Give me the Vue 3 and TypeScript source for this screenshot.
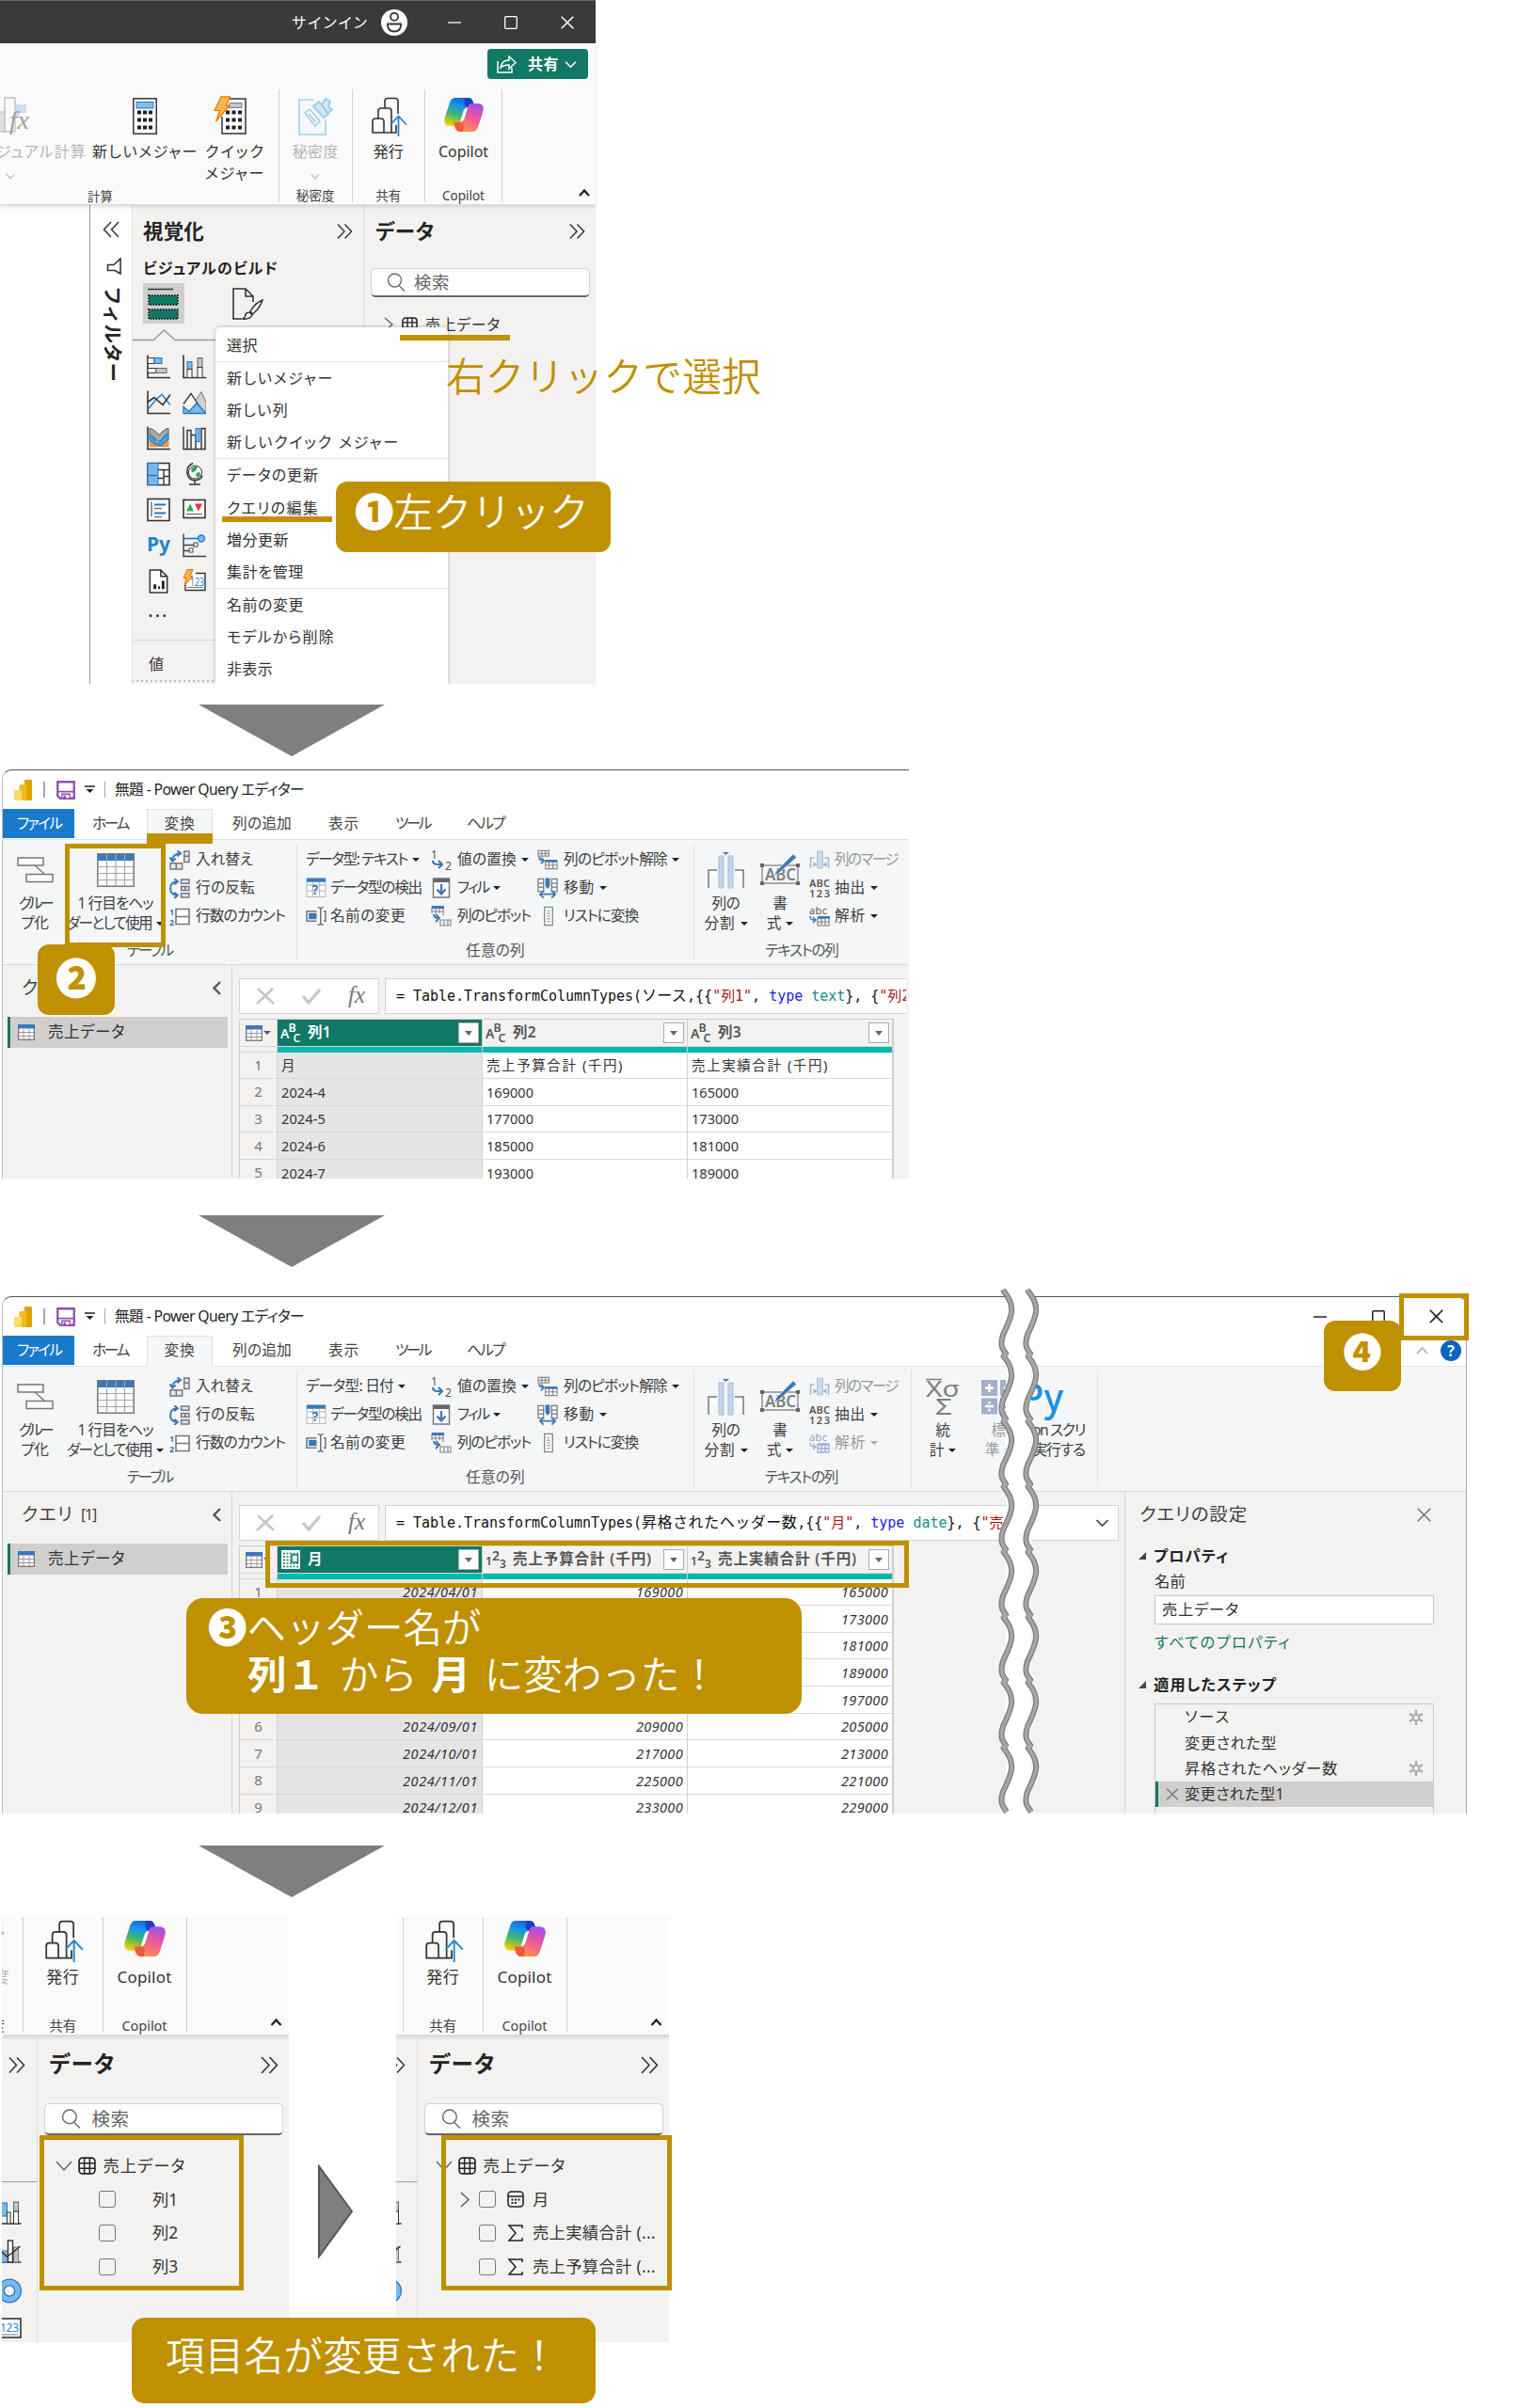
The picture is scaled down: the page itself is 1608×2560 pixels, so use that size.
<script setup lang="ts">
interface Cmd { icon?: string; text: string; w: number; arrow?: boolean; dim?: boolean }
interface Cell { text: string; w: number }
interface Editor {
  id: string
  typeCmd: Cmd
  parse: Cmd
  source: string
  sourceW: number
  col: string
  kind: string
  kindCut: string
  heads: { name: string; w: number; icon: string; sel?: boolean }[]
  rows: Cell[][]
}

/* Spreads the letters of a label so that it takes exactly the given width. */
const vFit = {
  mounted(el: HTMLElement, binding: { value: number }) {
    const n = (el.textContent ?? '').length
    const natural = el.getBoundingClientRect().width
    if (n > 0) el.style.letterSpacing = `${(binding.value - natural) / n}px`
  },
}

const menu: Cell[][] = [
  [{ text: '選択', w: 33 }],
  [{ text: '新しいメジャー', w: 114 }, { text: '新しい列', w: 66 }, { text: '新しいクイック メジャー', w: 184 }],
  [{ text: 'データの更新', w: 98 }, { text: 'クエリの編集', w: 98 }, { text: '増分更新', w: 66 }, { text: '集計を管理', w: 82 }],
  [{ text: '名前の変更', w: 82 }, { text: 'モデルから削除', w: 115 }, { text: '非表示', w: 49 }],
]

const visuals = ['v-hbar', 'v-vbar', 'v-line', 'v-area', 'v-ribbon', 'v-fall', 'v-tree', 'v-globe', 'v-card', 'v-kpi', 'v-py', 'v-key', 'v-page', 'v-123']

const tabs = [
  { text: 'ホーム', w: 38, ml: 19 },
  { text: '変換', w: 33, ml: 20, on: true },
  { text: '列の追加', w: 63, ml: 21 },
  { text: '表示', w: 33, ml: 39 },
  { text: 'ツール', w: 37, ml: 38 },
  { text: 'ヘルプ', w: 40, ml: 39 },
]

const tableCmds: Cmd[] = [
  { icon: 'q-swap', text: '入れ替え', w: 61 },
  { icon: 'q-rev', text: '行の反転', w: 63 },
  { icon: 'q-count', text: '行数のカウント', w: 95 },
]
const anyCmds = (first: Cmd): Cmd[][] => [
  [first, { icon: 'q-detect', text: 'データ型の検出', w: 97 }, { icon: 'q-rename', text: '名前の変更', w: 80 }],
  [{ icon: 'q-replace', text: '値の置換', w: 63, arrow: true }, { icon: 'q-fill', text: 'フィル', w: 33, arrow: true }, { icon: 'q-pivot', text: '列のピボット', w: 78 }],
  [{ icon: 'q-unpivot', text: '列のピボット解除', w: 110, arrow: true }, { icon: 'q-move', text: '移動', w: 33, arrow: true }, { icon: 'q-list', text: 'リストに変換', w: 79 }],
]
const textCmds = (parse: Cmd): Cmd[] => [
  { icon: 'q-merge', text: '列のマージ', w: 67, dim: true },
  { icon: 'q-extract', text: '抽出', w: 33, arrow: true },
  parse,
]

const months = ['04', '05', '06', '07', '08', '09', '10', '11', '12']

const editors: Editor[] = [
  {
    id: 'before',
    typeCmd: { text: 'データ型: テキスト', w: 108, arrow: true },
    parse: { icon: 'q-parse', text: '解析', w: 33, arrow: true },
    source: 'ソース', sourceW: 48, col: '列1', kind: 'text', kindCut: '列2',
    heads: [
      { name: '列1', w: 25, icon: 'q-abc', sel: true },
      { name: '列2', w: 25, icon: 'q-abc' },
      { name: '列3', w: 25, icon: 'q-abc' },
    ],
    rows: [
      [{ text: '月', w: 16 }, { text: '売上予算合計 (千円)', w: 146 }, { text: '売上実績合計 (千円)', w: 146 }],
      ...[4, 5, 6, 7].map((m, i) => [
        { text: `2024-${m}`, w: 47 },
        { text: String(169000 + i * 8000), w: 50 },
        { text: String(165000 + i * 8000), w: 50 },
      ]),
    ],
  },
  {
    id: 'after',
    typeCmd: { text: 'データ型: 日付', w: 93, arrow: true },
    parse: { icon: 'q-parse-dim', text: '解析', w: 33, arrow: true, dim: true },
    source: '昇格されたヘッダー数', sourceW: 165, col: '月', kind: 'date', kindCut: '売',
    heads: [
      { name: '月', w: 16, icon: 'q-cal', sel: true },
      { name: '売上予算合計 (千円)', w: 148, icon: 'q-123' },
      { name: '売上実績合計 (千円)', w: 148, icon: 'q-123' },
    ],
    rows: months.map((m, i) => [
      { text: `2024/${m}/01`, w: 80 },
      { text: String(169000 + i * 8000), w: 50 },
      { text: String(165000 + i * 8000), w: 50 },
    ]),
  },
]

const steps = [
  { text: 'ソース', w: 49, gear: true },
  { text: '変更された型', w: 98 },
  { text: '昇格されたヘッダー数', w: 163, gear: true },
  { text: '変更された型1', w: 106, on: true },
]

const wave = (x: number): string => {
  const p = 69.4
  let d = `M${x} 3`
  for (let i = 0; i < 8; i++) {
    const y = 3 + i * p
    d += ` L${x + 1} ${y + 2} C${x + 16} ${y + 20} ${x + 7} ${y + 32} ${x} ${y + 48} C${x - 4} ${y + 60} ${x} ${y + 64} ${x + 4} ${y + p}`
    if (i < 7) d += ` L${x} ${y + p}`
  }
  return d
}

const panes = [
  { id: 'old', fields: [{ name: '列1', w: 27 }, { name: '列2', w: 27 }, { name: '列3', w: 27 }] },
  { id: 'new', fields: [
    { name: '月', w: 18, icon: 'f-cal', expand: true },
    { name: '売上実績合計 (...', w: 131, icon: 'f-sum' },
    { name: '売上予算合計 (...', w: 131, icon: 'f-sum' },
  ] },
] as { id: string; fields: { name: string; w: number; icon?: string; expand?: boolean }[] }[]
</script>

<template>
  <svg class="defs" width="0" height="0">
    <defs>
      <linearGradient id="cpA" x1="0.6" y1="0" x2="0.3" y2="1">
        <stop offset="0" stop-color="#1a5fe0" /><stop offset=".3" stop-color="#1597e8" />
        <stop offset=".6" stop-color="#3fb56d" /><stop offset="1" stop-color="#f5d000" />
      </linearGradient>
      <linearGradient id="cpB" x1="0.7" y1="0" x2="0.3" y2="1">
        <stop offset="0" stop-color="#a34fe8" /><stop offset=".45" stop-color="#f0559a" /><stop offset="1" stop-color="#fb9a45" />
      </linearGradient>
    </defs>
  </svg>
  <svg class="symbols">
    <symbol id="dbl-l" viewBox="0 0 18 18"><path d="M9 1L1.500 9 9 17M17 1L9.500 9 17 17" fill="none" stroke="#333" stroke-width="1.500" /></symbol>
    <symbol id="dbl-r" viewBox="0 0 18 18"><path d="M1 1L8.500 9 1 17M9 1L16.500 9 9 17" fill="none" stroke="#333" stroke-width="1.500" /></symbol>
    <symbol id="chev" viewBox="0 0 14 10"><path d="M1 2l6 6 6-6" fill="none" stroke="currentColor" stroke-width="1.700" /></symbol>
    <symbol id="caret" viewBox="0 0 12 10"><path d="M1 8l5-5.500 5 5.500" fill="none" stroke="#222" stroke-width="2.300" /></symbol>
    <symbol id="close" viewBox="0 0 14 14"><path d="M.7.7l12.600 12.600M13.300.7L.7 13.300" fill="none" stroke="currentColor" stroke-width="1.500" /></symbol>
    <symbol id="search" viewBox="0 0 20 20"><circle cx="8.500" cy="8" r="7" fill="none" stroke="#666" stroke-width="1.300" /><path d="M13 13.500l6 6" stroke="#666" stroke-width="1.300" /></symbol>
    <symbol id="grid" viewBox="0 0 18 18"><rect x="1" y="1" width="16" height="16" rx="3.500" fill="none" stroke="#222" stroke-width="1.600" /><path d="M6.300 1v16M11.700 1v16M1 6.300h16M1 11.700h16" stroke="#222" stroke-width="1.400" /></symbol>
    <symbol id="calc" viewBox="0 0 26 39">
      <rect x=".8" y=".8" width="24.400" height="37.400" fill="#fff" stroke="#333" stroke-width="1.500" />
      <rect x="4" y="4.500" width="18" height="6.500" fill="#83beec" stroke="#1e78c8" />
      <path d="M5 15.500h16M5 23.500h16M5 31.500h16" stroke="#222" stroke-width="4" stroke-dasharray="4 2" />
    </symbol>
    <symbol id="quick" viewBox="0 0 35 41">
      <path d="M9 22v18h25V3H16" fill="#fff" stroke="#333" stroke-width="1.500" />
      <path d="M17 7.500h13v5H16z" fill="#c8c6c4" stroke="#777" />
      <path d="M13 17.500h17M13 25.500h17M13 33.500h17" stroke="#222" stroke-width="4" stroke-dasharray="4 2.500" />
      <path d="M8 .8h9.500l-4 9.500H17L2.500 27l4-11.500H1z" fill="#ffb74d" stroke="#e07b00" stroke-width="1.200" />
    </symbol>
    <symbol id="visfx" viewBox="0 0 31 40">
      <path d="M0 16h6v21H0" fill="#e1dfdd" stroke="#bbb" /><rect x="5" y="1" width="11" height="36" fill="#fafafa" stroke="#aaa" /><path d="M17 8h11v9h-8v6h-3z" fill="#c7e0f4" />
      <text x="10" y="34" font-family="Liberation Serif, serif" font-style="italic" font-size="28" textLength="21" fill="#a19f9d">fx</text>
    </symbol>
    <symbol id="sens" viewBox="0 0 37 41">
      <path d="M16 3H1v37h28V24" fill="#f3f9fd" stroke="#a5d0ea" stroke-width="1.600" />
      <path d="M7 17l5-4 11 13-5 5zM11 18l8 9" fill="#fafafa" stroke="#9ccce8" stroke-width="1.500" />
      <path d="M16 10l6-5 10 13-5 4zM25 8l4-6 5 3-2 6 4 2 -5 5z" fill="#cfe6f5" stroke="#9ccce8" stroke-width="1.800" />
    </symbol>
    <symbol id="publish" viewBox="0 0 38 42">
      <path d="M1 38V26q0-3 3-3h6q3 0 3 3v12zM7 23v-8q0-3 3-3h8q3 0 3 3v23H13M14 12V4.500q0-3 3-3h8q3 0 3 3V18M21 38h5V30" fill="none" stroke="#333" stroke-width="1.600" />
      <path d="M28.500 42V20.500M20 29.500l8.500-9 8.500 9" fill="none" stroke="#2488c8" stroke-width="1.800" />
    </symbol>
    <symbol id="copilot" viewBox="0 0 42 38">
      <path d="M12 1h13q4.500 0 6 5l1.500 5h-6q-4.500 0-6 4l-4 13q-1 3-4 3H7Q-1.500 31 .8 22L6 6q1.500-5 6-5z" fill="url(#cpA)" />
      <path d="M22 1h5q3 1 4 5l1.500 5h-7q-3 0-4-4z" fill="#1b3fc4" />
      <path d="M30 37H17q-4.500 0-6-5L9.500 27h6q4.500 0 6-4l4-13q1-3 4-3H35q8.500 0 6.200 9L36 32q-1.500 5-6 5z" fill="url(#cpB)" />
      <path d="M20 37h-4q-3-1-4-5l-1.500-5h6q4 0 4.500 4z" fill="#f05a3c" />
    </symbol>

    <symbol id="v-hbar" viewBox="0 0 25 25"><path d="M1 0v24h24" fill="none" stroke="#333" stroke-width="1.600" /><rect x="1" y="3" width="7" height="6" fill="#fff" stroke="#333" /><rect x="8" y="3" width="8" height="6" fill="#7ab8ea" stroke="#1f77c9" /><rect x="1" y="14" width="9" height="5" fill="#fff" stroke="#333" /><rect x="10" y="14" width="11" height="5" fill="#c8c6c4" stroke="#666" /></symbol>
    <symbol id="v-vbar" viewBox="0 0 25 25"><path d="M1 0v24h24" fill="none" stroke="#333" stroke-width="1.600" /><rect x="5" y="7" width="5" height="8" fill="#7ab8ea" stroke="#1f77c9" /><rect x="5" y="15" width="5" height="9" fill="#fff" stroke="#333" /><rect x="16" y="3" width="5" height="10" fill="#c8c6c4" stroke="#666" /><rect x="16" y="13" width="5" height="11" fill="#fff" stroke="#333" /></symbol>
    <symbol id="v-line" viewBox="0 0 25 25"><path d="M1 0v24h24" fill="none" stroke="#333" stroke-width="1.600" /><path d="M1 20L10 9l6-5 9 11" fill="none" stroke="#1f8ad0" stroke-width="1.600" /><path d="M1 12l7-5 9 8 8-11" fill="none" stroke="#333" stroke-width="1.600" /></symbol>
    <symbol id="v-area" viewBox="0 0 25 25"><path d="M13 12l7-11 5 11v12" fill="#d2d0ce" stroke="#777" /><path d="M1 14L9 3l8 12" fill="#fff" stroke="#333" stroke-width="1.300" /><path d="M1 17l6 5 8-9 10 11H1z" fill="#7ab8ea" stroke="#1f77c9" stroke-width="1.300" /></symbol>
    <symbol id="v-ribbon" viewBox="0 0 25 25"><path d="M1 0v24h24" fill="none" stroke="#333" stroke-width="1.600" /><path d="M3 12h5v9H3zM17 12h6v9h-6zM8 18h9v3H8z" fill="#f5a23c" stroke="#d9801a" stroke-width=".8" /><path d="M3 2q4 0 10 7 6-7 10-7v7l-10 7L3 9z" fill="#aaa" stroke="#555" /><path d="M3 9q4 0 6 5t4 2q2 0 4-4t6-4v5q-5 7-10 7T3 14z" fill="#4a9fe0" stroke="#1f6fb8" /></symbol>
    <symbol id="v-fall" viewBox="0 0 25 25"><path d="M1 0v24h24M5 24V4h4v20M9 9h5v15M20 24V2h4v22" fill="none" stroke="#333" stroke-width="1.400" /><rect x="14" y="2" width="4" height="14" fill="#7ab8ea" stroke="#1f77c9" /></symbol>
    <symbol id="v-tree" viewBox="0 0 25 25"><rect x="1" y="1" width="23" height="23" fill="#fff" stroke="#333" stroke-width="1.600" /><rect x="1" y="1" width="11" height="23" fill="#7ab8ea" stroke="#1f77c9" /><path d="M1 14h11" stroke="#1f77c9" stroke-width="1.400" /><path d="M12 8h12M18 8v16M12 17h6M18 15h6" stroke="#333" stroke-width="1.400" /></symbol>
    <symbol id="v-globe" viewBox="0 0 25 25"><circle cx="13.500" cy="10.500" r="7" fill="#fff" stroke="#333" /><path d="M9 7q4-4 7-2l-2 4-4 2zM14 12l4-2 1 4-4 2z" fill="#2ea04e" /><path d="M11 1Q4 4 5 12q2 8 10 7 5-1 6-5M13 19v4M7 23.500h12" fill="none" stroke="#333" stroke-width="1.500" /></symbol>
    <symbol id="v-card" viewBox="0 0 25 25"><rect x="1" y="1" width="23" height="23" fill="#fff" stroke="#333" stroke-width="1.600" /><path d="M5 4v16" stroke="#333" /><path d="M8 7h12M8 16h12" stroke="#1f77c9" stroke-width="2" /><path d="M8 11h8M8 20h8" stroke="#777" stroke-width="1.500" /></symbol>
    <symbol id="v-kpi" viewBox="0 0 25 25"><rect x="1" y="2" width="23" height="19" fill="#fff" stroke="#333" stroke-width="1.600" /><path d="M4 14l4-8 4 8z" fill="#3aa655" /><path d="M13 6h8l-4 8z" fill="#e8323c" /><path d="M4 17h17" stroke="#555" /></symbol>
    <symbol id="v-py" viewBox="0 0 25 25"><text x="0" y="18" font-family="Noto Sans, sans-serif" font-weight="700" font-size="22" textLength="25" lengthAdjust="spacingAndGlyphs" fill="#1c86cf">Py</text></symbol>
    <symbol id="v-key" viewBox="0 0 25 25"><path d="M1 0v24h24M1 12h12M1 18h8" fill="none" stroke="#444" stroke-width="1.500" /><path d="M1 5h15" stroke="#1f77c9" stroke-width="1.600" /><circle cx="20" cy="5" r="3.500" fill="#7ab8ea" stroke="#1f77c9" stroke-width="1.300" /><rect x="12" y="9.500" width="4" height="4" fill="#fff" stroke="#444" /><rect x="7" y="15.500" width="4" height="4" fill="#fff" stroke="#444" /></symbol>
    <symbol id="v-page" viewBox="0 0 25 27"><path d="M3 1h12l7 7v18H3zM15 1v7h7" fill="#fff" stroke="#333" stroke-width="1.600" /><path d="M7 22v-5h3v5zM12 22v-3h2v3zM16 22v-9h3v9z" fill="#222" /></symbol>
    <symbol id="v-123" viewBox="0 0 25 25"><path d="M14 4h10v18H3v-6" fill="#fff" stroke="#333" stroke-width="1.400" /><text x="8" y="17" font-family="Noto Sans, sans-serif" font-size="12" textLength="15" lengthAdjust="spacingAndGlyphs" fill="#1f8ad0">123</text><path d="M5 19h17" stroke="#777" /><path d="M5 0h6l-3 7h3L2 17l2-8H1z" fill="#ffb04a" stroke="#d87400" /></symbol>

    <symbol id="q-pbi" viewBox="0 0 19 22"><rect x="11" y="0" width="8" height="22" rx="1" fill="#e3a100" /><path d="M5.500 6q0-1 1-1h6q1 0 1 1v16h-8z" fill="#f0bd1c" /><path d="M0 12q0-1 1-1h6q1 0 1 1v10H1q-1 0-1-1z" fill="#f8dc6a" /></symbol>
    <symbol id="q-save" viewBox="0 0 19 19"><path d="M1.200 1.200h16.600v16.600H3.700l-2.500-2.500z" fill="#fff" stroke="#8a52ab" stroke-width="2.200" /><path d="M1.500 11h16" stroke="#8a52ab" stroke-width="1.800" /><path d="M5.500 13.500h8V18h-8z" fill="#fff" stroke="#8a52ab" stroke-width="1.300" /><path d="M7 15h2.500v3H7z" fill="#8a52ab" /></symbol>
    <symbol id="q-group" viewBox="0 0 39 28"><path d="M19 9l10 9" stroke="#777" stroke-width="1.300" /><path d="M1 1h27v8H1zM10 18.500h28v8H10z" fill="#fff" stroke="#777" stroke-width="1.500" /></symbol>
    <symbol id="q-table" viewBox="0 0 40 36"><rect x=".8" y=".8" width="38.400" height="34.400" fill="#fff" stroke="#777" stroke-width="1.500" /><path d="M1 1h38v7H1z" fill="#3c79b8" /><path d="M1 14.500h38M1 21.500h38M1 28.500h38M10.500 1v34M20 1v34M29.500 1v34" stroke="#a6a6a6" stroke-width="1.200" /></symbol>
    <symbol id="q-swap" viewBox="0 0 21 20"><path d="M15 1h5v11h-5zM15 6h5M1 13h12v6H1zM7 13v6" fill="#e3ebf3" stroke="#777" stroke-width="1.400" /><path d="M3 10q0-6 8-7M8 .5L11.500 3 8 6M.5 7L3 11l3.500-3" fill="none" stroke="#3c79b8" stroke-width="1.900" /></symbol>
    <symbol id="q-rev" viewBox="0 0 21 20"><path d="M12 1h8v4h-8zM12 8h8v4h-8zM12 15h8v4h-8zM16 8v4" fill="#dbe7f2" stroke="#777" stroke-width="1.400" /><path d="M7 3q-6 1-6 7t6 7M5 0l3.500 3L5 6M5 14l3.500 3L5 20" fill="none" stroke="#3c79b8" stroke-width="1.900" /></symbol>
    <symbol id="q-count" viewBox="0 0 22 20"><path d="M7 2h14v16H7zM7 10h14" fill="#fff" stroke="#777" stroke-width="1.600" /><text x="0" y="8" font-family="Noto Sans, sans-serif" font-size="9" font-weight="700" fill="#3c79b8">1</text><text x="0" y="19" font-family="Noto Sans, sans-serif" font-size="9" font-weight="700" fill="#3c79b8">2</text></symbol>
    <symbol id="q-detect" viewBox="0 0 21 20"><path d="M1 1h19v18H1zM7 1v18M14 1v18M1 7h19M1 13h19" fill="#fff" stroke="#bbb" /><path d="M1 0h19v4H1z" fill="#3c79b8" /><text x="6.500" y="17" font-family="Noto Sans, sans-serif" font-size="13" font-weight="700" fill="#3c79b8">?</text></symbol>
    <symbol id="q-rename" viewBox="0 0 21 20"><path d="M11 5H1v10h10M18 5h2v10h-2" fill="none" stroke="#777" stroke-width="1.500" /><path d="M3 7h8v6H3z" fill="#3c79b8" /><path d="M12 1q3 0 3 2v14q0 2-3 2M18 1q-3 0-3 2M18 19q-3 0-3-2" fill="none" stroke="#666" stroke-width="1.300" /></symbol>
    <symbol id="q-replace" viewBox="0 0 22 22"><text x="0" y="10" font-family="Noto Sans, sans-serif" font-size="12" fill="#555">1</text><text x="15" y="22" font-family="Noto Sans, sans-serif" font-size="12" fill="#555">2</text><path d="M2 12q0 4 5 4h4M8 12l4 4-4 4" fill="none" stroke="#3c79b8" stroke-width="2.200" /></symbol>
    <symbol id="q-fill" viewBox="0 0 21 22"><path d="M2 1h17v20H2z" fill="#fff" stroke="#777" stroke-width="1.500" /><path d="M2 1h17v4H2z" fill="#666" /><path d="M10.500 7v10M6 12.500l4.500 5 4.500-5" fill="none" stroke="#3c79b8" stroke-width="2.300" /></symbol>
    <symbol id="q-pivot" viewBox="0 0 22 22"><path d="M1 1h12v9M1 1v7M5 2v6M9 2v6M1 6h12M10 15h11v6H10zM14 15v6M18 15v6" fill="none" stroke="#888" stroke-width="1.200" /><path d="M1 0h13v3H1z" fill="#3c79b8" /><path d="M3 9q0 4 5 4M5 9l4 4-4 4" fill="none" stroke="#3c79b8" stroke-width="1.900" /></symbol>
    <symbol id="q-unpivot" viewBox="0 0 23 22"><path d="M1 1h12v6H1zM5 1v6M9 1v6M1 4h12M9 12h13v9H9zM13 12v9M17.500 12v9M9 17h13" fill="#fff" stroke="#888" stroke-width="1.200" /><path d="M9 11h13v3H9z" fill="#3c79b8" /><path d="M2 8q0 4 5 4M4 8.500l3.500 3.500L4 15.500" fill="none" stroke="#3c79b8" stroke-width="1.700" /></symbol>
    <symbol id="q-move" viewBox="0 0 23 22"><path d="M1 1h6v14H1zM16 1h6v14h-6zM1 6h6M1 10h6M16 6h6M16 10h6" fill="#fff" stroke="#777" stroke-width="1.300" /><path d="M9 0h5v9l-2.500 3L9 9z" fill="#3c79b8" /><path d="M4 18h15M7 14l-4 4 4 4M16 14l4 4-4 4" fill="none" stroke="#3c79b8" stroke-width="1.800" /></symbol>
    <symbol id="q-list" viewBox="0 0 23 22"><rect x="8" y="1" width="9" height="20" fill="#fff" stroke="#888" stroke-width="1.400" /><path d="M10.500 5h4M10.500 8h4M10.500 11h4M10.500 14h4M10.500 17h4" stroke="#999" stroke-width="1.200" /></symbol>
    <symbol id="q-merge" viewBox="0 0 21 22"><path d="M1 20V9h4M20 20V9h-4" fill="none" stroke="#a3b6d3" stroke-width="1.500" /><path d="M8 2h6v18H8z" fill="#c9d9ec" stroke="#b3c5de" /><path d="M4 13l4 3-4 3M18 13l-4 3 4 3" fill="#a3b6d3" /></symbol>
    <symbol id="q-extract" viewBox="0 0 22 22"><g font-family="Noto Sans, sans-serif" font-size="11" font-weight="600" fill="#555"><text x="0" y="10" textLength="22">ABC</text><text x="0" y="21" textLength="22">123</text></g></symbol>
    <symbol id="q-parse" viewBox="0 0 22 22"><text x="0" y="9" font-family="Noto Sans, sans-serif" font-size="11" textLength="19" fill="#555">abc</text><path d="M9 13h12v8H9zM13 13v8M17 13v8M9 17h12" fill="#fff" stroke="#777" stroke-width="1.100" /><path d="M9 11h13v2.500H9z" fill="#3c79b8" /><path d="M1 11q0 4 4 4h2M4 12l3 3-3 3" fill="none" stroke="#3c79b8" stroke-width="1.500" /></symbol>
    <symbol id="q-parse-dim" viewBox="0 0 22 22"><text x="0" y="9" font-family="Noto Sans, sans-serif" font-size="11" textLength="19" fill="#8fa2c4">abc</text><path d="M9 13h12v8H9zM13 13v8M17 13v8M9 17h12M9 12h12M1 11q0 4 4 4h2M4 12l3 3-3 3" fill="none" stroke="#9cb0d2" stroke-width="1.300" /></symbol>
    <symbol id="q-split" viewBox="0 0 39 40"><path d="M1 39V20h9M38 39V20h-9" fill="#fff" stroke="#777" stroke-width="1.500" /><path d="M12 5h5v34h-5zM22 5h5v34h-5z" fill="#c3d5ea" stroke="#a7bdd9" /><path d="M16 1h7l-3.500 3z" fill="#3c79b8" /></symbol>
    <symbol id="q-format" viewBox="0 0 42 36"><rect x="2" y="13" width="38" height="19" fill="none" stroke="#777" stroke-width="1.200" /><path d="M0 11h4v4H0zM38 11h4v4h-4zM0 30h4v4H0zM38 30h4v4h-4z" fill="#666" /><text x="5" y="29" font-family="Noto Sans, sans-serif" font-size="17" font-weight="600" textLength="33" lengthAdjust="spacingAndGlyphs" fill="#808080">ABC</text><path d="M15 24l2-5L35 1l3.500 3.500L20 21z" fill="#3c79b8" stroke="#f4f6f8" stroke-width=".6" /></symbol>
    <symbol id="q-stat" viewBox="0 0 38 40"><g font-family="Noto Sans, sans-serif" fill="#808080"><path d="M1 1.500h17" stroke="#808080" stroke-width="1.600" /><text x="1" y="20" font-size="24" textLength="36" lengthAdjust="spacingAndGlyphs">Χσ</text><text x="11" y="39" font-size="23" textLength="18" lengthAdjust="spacingAndGlyphs">Σ</text></g></symbol>
    <symbol id="q-std" viewBox="0 0 38 40"><path d="M1 2h17v17H1zM21 2h17v17H21zM1 21.500h17v17H1zM21 21.500h17v17H21z" fill="#a3b0cc" /><path d="M9.500 6v9M5 10.500h9M25 10.500h9M5 30h9M9.500 25v2.500M9.500 33v2.500M25 26l9 9M34 26l-9 9" stroke="#fff" stroke-width="2.300" /></symbol>
    <symbol id="q-abc" viewBox="0 0 22 22"><g font-family="Noto Sans, sans-serif" font-weight="600" font-size="14" fill="currentColor"><text x="0" y="17">A</text><text x="8.500" y="10" font-size="12.500">B</text><text x="13.500" y="21" font-size="12.500">C</text></g></symbol>
    <symbol id="q-123" viewBox="0 0 22 22"><g font-family="Noto Sans, sans-serif" font-weight="600" fill="currentColor"><text x="0" y="17" font-size="12">1</text><text x="7" y="12" font-size="14">2</text><text x="15" y="20" font-size="12">3</text></g></symbol>
    <symbol id="q-cal" viewBox="0 0 22 22"><path d="M1 1h20v20H1z" fill="#fff" /><path d="M3 4.500h16M3 8h8M3 11.500h8M3 15h16M3 18.500h16" stroke="#117865" stroke-width="1.700" stroke-dasharray="2 1.500" /><path d="M12 6h6.500v8H12z" fill="#fff" stroke="#117865" stroke-width="1.600" /></symbol>
    <symbol id="q-mini" viewBox="0 0 18 17"><rect x=".7" y=".7" width="16.600" height="15.600" fill="#fff" stroke="#777" stroke-width="1.300" /><path d="M0 0h18v4.500H0z" fill="#3c79b8" /><path d="M1 8.500h16M1 12.500h16M6 5v11M12 5v11" stroke="#999" /></symbol>
    <symbol id="gear" viewBox="0 0 16 16"><g fill="none" stroke="#aaa"><circle cx="8" cy="8" r="3.300" stroke-width="1.800" /><path d="M8 0v4M8 12v4M1 4l3.500 2M11.500 10L15 12M1 12l3.500-2M11.500 6L15 4" stroke-width="2.200" /></g></symbol>
    <symbol id="f-cal" viewBox="0 0 18 18"><rect x="1" y="1" width="16" height="16" rx="3.500" fill="none" stroke="#222" stroke-width="1.600" /><path d="M1 6h16" stroke="#222" stroke-width="1.500" /><path d="M4.500 9.500h9M4.500 13h6" stroke="#222" stroke-width="2" stroke-dasharray="2 1.500" /></symbol>
    <symbol id="f-sum" viewBox="0 0 18 18"><path d="M16 4V1H2l7 8-7 8h14v-3" fill="none" stroke="#222" stroke-width="1.500" /></symbol>
  </svg>

  <main class="page">
    <!-- Step 1: report window with the context menu -->
    <section class="shot report">
      <header class="titlebar">
        <span v-fit="82">サインイン</span>
        <svg class="user" viewBox="0 0 28 28"><circle cx="14" cy="14" r="14" fill="#fff" /><circle cx="14" cy="7.800" r="4" fill="none" stroke="#333" stroke-width="1.800" /><path d="M7 15.500h14v2q-1 6-7 6t-7-6z" fill="none" stroke="#333" stroke-width="1.800" /></svg>
        <svg class="win min" viewBox="0 0 14 14"><path d="M0 7h14" stroke="#fff" stroke-width="1.300" /></svg>
        <svg class="win" viewBox="0 0 14 14"><rect x=".7" y=".7" width="12.600" height="12.600" rx="1" fill="none" stroke="#fff" stroke-width="1.300" /></svg>
        <svg class="win"><use href="#close" /></svg>
      </header>
      <div class="ribbon1">
        <button class="share">
          <svg width="21" height="19" viewBox="0 0 21 19"><path d="M1 6v12h15v-5M4 13q1-8 9-8V1l7 6.500-7 6.500v-4q-6 0-9 3z" fill="none" stroke="#fff" stroke-width="1.500" /></svg>
          <b v-fit="33">共有</b>
          <svg width="13" height="9"><use href="#chev" /></svg>
        </button>
        <div class="groups">
          <div class="grp g-calc">
            <div class="btns">
              <div class="rb off b1"><svg width="31" height="40"><use href="#visfx" /></svg><span v-fit="112">ビジュアル計算</span><svg class="dn" width="10" height="7"><use href="#chev" /></svg></div>
              <div class="rb b2"><svg width="26" height="39"><use href="#calc" /></svg><span v-fit="113">新しいメジャー</span></div>
              <div class="rb b3"><svg width="35" height="41"><use href="#quick" /></svg><span v-fit="64">クイック</span><span v-fit="64">メジャー</span></div>
            </div>
            <small v-fit="27">計算</small>
          </div>
          <div class="grp g77">
            <div class="rb off"><svg width="37" height="41"><use href="#sens" /></svg><span v-fit="49">秘密度</span><svg class="dn" width="10" height="7"><use href="#chev" /></svg></div>
            <small v-fit="41">秘密度</small>
          </div>
          <div class="grp g77">
            <div class="rb"><svg class="pub" width="38" height="42"><use href="#publish" /></svg><span v-fit="32">発行</span></div>
            <small v-fit="27">共有</small>
          </div>
          <div class="grp g82">
            <div class="rb"><svg width="42" height="38"><use href="#copilot" /></svg><span v-fit="53">Copilot</span></div>
            <small v-fit="45">Copilot</small>
          </div>
          <svg class="fold" width="12" height="10"><use href="#caret" /></svg>
        </div>
      </div>
      <div class="workspace">
        <div class="canvas"></div>
        <aside class="filters">
          <svg width="18" height="18"><use href="#dbl-l" /></svg>
          <svg class="fun" width="16" height="18" viewBox="0 0 16 18"><path d="M15 1v16l-6-3.500H1.500v-6H8z" fill="none" stroke="#333" stroke-width="1.600" /></svg>
          <b>フィルター</b>
        </aside>
        <aside class="build">
          <div class="phead"><b v-fit="65">視覚化</b><svg width="17" height="18"><use href="#dbl-r" /></svg></div>
          <div class="sub"><b v-fit="144">ビジュアルのビルド</b></div>
          <div class="modes">
            <span class="mode"><svg width="33" height="34" viewBox="0 0 33 34"><path d="M0 1.500h27" stroke="#333" stroke-width="1.500" /><g fill="#117865" stroke="#222" stroke-width="1.800" stroke-dasharray="1.500 1.500"><rect x="1" y="8" width="31" height="10" /><rect x="1" y="23" width="31" height="10" /></g></svg></span>
            <svg class="paint" width="33" height="34" viewBox="0 0 33 34"><path d="M10 33H1V1h13l8 8v6M14 1v8h8" fill="none" stroke="#333" stroke-width="1.600" /><path d="M32 13q-8 3-13 12l2.500 3Q29 22 32 13zM18.500 26q-5 0-5 4.500-1 2-3 2.500 8 1 10.500-4z" fill="#eee" stroke="#333" stroke-width="1.500" /></svg>
          </div>
          <svg class="notch" width="246" height="14" viewBox="0 0 246 14"><path d="M0 12.500h22L33.500 2 45 12.500H246" fill="none" stroke="#999" stroke-width="1.500" /></svg>
          <div class="vis"><svg v-for="v in visuals" :key="v" width="25" height="26"><use :href="'#' + v" /></svg></div>
          <div class="more">···</div>
          <div class="well">値</div>
        </aside>
        <aside class="data">
          <div class="phead"><b v-fit="63">データ</b><svg width="17" height="18"><use href="#dbl-r" /></svg></div>
          <div class="find"><svg width="20" height="20"><use href="#search" /></svg><span v-fit="38">検索</span></div>
          <div class="tree">
            <svg class="tw" width="10" height="16" viewBox="0 0 10 16"><path d="M1 1l8 7-8 7" fill="none" stroke="#666" stroke-width="1.400" /></svg>
            <svg width="17" height="17"><use href="#grid" /></svg><span v-fit="80">売上データ</span>
          </div>
        </aside>
      </div>
      <div class="menu">
        <div v-for="(g, i) in menu" :key="i" class="mgroup">
          <div v-for="m in g" :key="m.text" class="mitem"><span v-fit="m.w">{{ m.text }}</span></div>
        </div>
      </div>
      <i class="rule r1"></i>
      <i class="rule r2"></i>
      <p class="hint"><span v-fit="335">右クリックで選択</span></p>
      <p class="note n1"><span><b class="num">❶</b>左クリック</span></p>
    </section>

    <svg class="down" width="198" height="55" viewBox="0 0 198 55"><path d="M0 0h198L99 55z" fill="#7f7f7f" /></svg>

    <!-- Steps 2 and 3: query editor before and after promoting headers -->
    <template v-for="e in editors" :key="e.id">
      <section class="shot editor" :class="e.id">
        <div class="frame">
          <header class="qtitle">
            <svg width="19" height="22"><use href="#q-pbi" /></svg><i class="bar"></i>
            <svg class="save" width="20" height="20"><use href="#q-save" /></svg>
            <svg class="qat" width="11" height="9" viewBox="0 0 11 9"><path d="M0 1h11" stroke="#222" stroke-width="1.500" /><path d="M1.500 4h8l-4 4z" fill="#222" /></svg><i class="bar b"></i>
            <span v-fit="201">無題 - Power Query エディター</span>
            <div v-if="e.id === 'after'" class="controls">
              <svg width="14" height="14" viewBox="0 0 14 14"><path d="M0 7h14" stroke="#222" stroke-width="1.600" /></svg>
              <svg width="14" height="14" viewBox="0 0 14 14"><rect x=".8" y=".8" width="12.400" height="12.400" rx="1" fill="none" stroke="#222" stroke-width="1.500" /></svg>
              <svg width="15" height="15"><use href="#close" /></svg>
            </div>
          </header>
          <nav class="qtabs">
            <span class="file"><span v-fit="47">ファイル</span></span>
            <span v-for="t in tabs" :key="t.text" class="tab" :class="{ on: t.on }" :style="{ marginLeft: t.ml + 'px' }"><span v-fit="t.w">{{ t.text }}</span></span>
            <div v-if="e.id === 'after'" class="helps">
              <svg width="13" height="9" viewBox="0 0 13 9"><path d="M1 8l5.500-6L12 8" fill="none" stroke="#aaa" stroke-width="1.500" /></svg>
              <b>?</b>
            </div>
          </nav>
          <div class="qribbon">
            <div class="qg t1">
              <div class="qb">
                <div class="big w66"><svg width="39" height="28"><use href="#q-group" /></svg><span v-fit="34">グルー</span><span v-fit="29">プ化</span></div>
                <div class="big w107"><svg width="40" height="36"><use href="#q-table" /></svg><span v-fit="80">1 行目をヘッ</span><span class="ar"><span v-fit="90">ダーとして使用</span></span></div>
                <div class="col c0"><div v-for="c in tableCmds" :key="c.text" class="cmd"><svg width="22" height="21"><use :href="'#' + c.icon" /></svg><span v-fit="c.w">{{ c.text }}</span></div></div>
              </div>
              <span v-fit="48" class="ql">テーブル</span>
            </div>
            <div class="qg t2">
              <div class="qb">
                <div v-for="(col, i) in anyCmds(e.typeCmd)" :key="i" class="col" :class="'c' + (i + 1)">
                  <div v-for="c in col" :key="c.text" class="cmd">
                    <svg v-if="c.icon" width="22" height="22"><use :href="'#' + c.icon" /></svg><span :class="{ ar: c.arrow }"><span v-fit="c.w">{{ c.text }}</span></span>
                  </div>
                </div>
              </div>
              <span v-fit="63" class="ql">任意の列</span>
            </div>
            <div class="qg t3">
              <div class="qb">
                <div class="big w58"><svg width="39" height="40"><use href="#q-split" /></svg><span v-fit="30">列の</span><span class="ar"><span v-fit="33">分割</span></span></div>
                <div class="big w56"><svg width="42" height="36"><use href="#q-format" /></svg><span>書</span><span class="ar"><span>式</span></span></div>
                <div class="col c4">
                  <div v-for="c in textCmds(e.parse)" :key="c.text" class="cmd" :class="{ dim: c.dim }"><svg width="22" height="22"><use :href="'#' + c.icon" /></svg><span :class="{ ar: c.arrow }"><span v-fit="c.w">{{ c.text }}</span></span></div>
                </div>
              </div>
              <span v-fit="77" class="ql">テキストの列</span>
            </div>
            <div v-if="e.id === 'after'" class="qg t4">
              <div class="qb">
                <div class="big w66"><svg width="38" height="40"><use href="#q-stat" /></svg><span>統</span><span class="ar"><span>計</span></span></div>
                <div class="big w52 dim"><svg width="38" height="40"><use href="#q-std" /></svg><span>標</span><span class="ar"><span>準</span></span></div>
                <div class="big py"><em>Py</em><span v-fit="56">on スクリ</span><span v-fit="69">を実行する</span></div>
              </div>
            </div>
          </div>
          <div class="qmain">
            <aside class="queries">
              <div class="qhead"><span v-fit="55">クエリ</span><small v-fit="16">[1]</small><svg width="9" height="15" viewBox="0 0 9 15"><path d="M8 1L1.500 7.500 8 14" fill="none" stroke="#555" stroke-width="2.400" /></svg></div>
              <div class="query"><svg width="18" height="17"><use href="#q-mini" /></svg><span v-fit="82">売上データ</span></div>
            </aside>
            <div class="sheet">
              <div class="fbar">
                <div class="fx"><svg width="20" height="18" viewBox="0 0 20 18"><path d="M2 1l17 16M18 1L1 17" stroke="#c8c6c4" stroke-width="2.600" /></svg><svg width="20" height="17" viewBox="0 0 20 17"><path d="M1 8l6 7L19 1" fill="none" stroke="#c8c6c4" stroke-width="3.200" /></svg><em>fx</em></div>
                <div class="formula"><code>= Table.TransformColumnTypes(<span v-fit="e.sourceW" class="src">{{ e.source }}</span>,{{ '{' }}{{ '{' }}<span class="str">"{{ e.col }}"</span>, <span class="kw">type</span> <span class="ty">{{ e.kind }}</span>}, {{ '{' }}<span class="str">"{{ e.kindCut }}</span></code><svg v-if="e.id === 'after'" width="15" height="10"><use href="#chev" /></svg></div>
              </div>
              <div class="table">
                <div class="tr th">
                  <div class="no"><svg width="18" height="17"><use href="#q-mini" /></svg><i></i></div>
                  <div v-for="h in e.heads" :key="h.name" class="td" :class="{ sel: h.sel }"><svg width="22" height="22"><use :href="'#' + h.icon" /></svg><b v-fit="h.w">{{ h.name }}</b><i class="dd"></i></div>
                </div>
                <div class="tr q"><div class="no"></div><div class="td"></div><div class="td"></div><div class="td"></div></div>
                <div v-for="(r, i) in e.rows" :key="i" class="tr">
                  <div class="no">{{ i + 1 }}</div>
                  <div v-for="(c, k) in r" :key="k" class="td" :class="{ sel: k === 0 }"><span v-fit="c.w">{{ c.text }}</span></div>
                </div>
              </div>
            </div>
            <aside v-if="e.id === 'after'" class="settings">
              <div class="sh"><span v-fit="115">クエリの設定</span><svg width="15" height="15"><use href="#close" /></svg></div>
              <div class="st"><i></i><b v-fit="80">プロパティ</b></div>
              <label><span v-fit="33">名前</span></label>
              <div class="inp"><span v-fit="82">売上データ</span></div>
              <a><span v-fit="145">すべてのプロパティ</span></a>
              <div class="st s2"><i></i><b v-fit="131">適用したステップ</b></div>
              <div class="steps">
                <div v-for="s in steps" :key="s.text" class="step" :class="{ on: s.on }">
                  <svg v-if="s.on" class="x" width="14" height="13"><use href="#close" /></svg>
                  <span v-fit="s.w">{{ s.text }}</span>
                  <svg v-if="s.gear" class="gear" width="16" height="16"><use href="#gear" /></svg>
                </div>
              </div>
            </aside>
          </div>
        </div>
        <template v-if="e.id === 'before'">
          <i class="rule tabrule"></i>
          <i class="box bx-head"></i>
          <p class="note sq n2"><b class="num">❷</b></p>
        </template>
        <template v-else>
          <svg class="tear" width="60" height="562" viewBox="0 0 60 562">
            <path d="M15 9h27v553H15z" fill="#fff" />
            <g fill="none" stroke-linejoin="bevel"><path :d="wave(12)" stroke="#7b7b7b" stroke-width="6" /><path :d="wave(38)" stroke="#7b7b7b" stroke-width="6" /><path :d="wave(12)" stroke="#a6a6a6" stroke-width="3.500" /><path :d="wave(38)" stroke="#a6a6a6" stroke-width="3.500" /></g>
          </svg>
          <i class="box bx-close"></i>
          <p class="note sq n4"><b class="num">❹</b></p>
          <i class="box bx-cols"></i>
          <p class="note n3"><span><b class="num">❸</b>ヘッダー名が</span><span class="in"><b>列１</b> から <b>月</b> に変わった！</span></p>
        </template>
      </section>
      <svg class="down" :class="e.id" width="198" height="55" viewBox="0 0 198 55"><path d="M0 0h198L99 55z" fill="#7f7f7f" /></svg>
    </template>

    <!-- Result: field list before and after -->
    <section class="result">
      <template v-for="p in panes" :key="p.id">
        <div class="pane" :class="p.id">
          <div class="inner">
            <div class="prib">
              <div class="grp pg0"><div class="rb off"><svg width="40" height="44"><use href="#sens" /></svg><span>秘密度</span></div><small>秘密度</small></div>
              <div class="grp pg1"><div class="rb"><svg class="pub" width="41" height="45"><use href="#publish" /></svg><span v-fit="35">発行</span></div><small v-fit="29">共有</small></div>
              <div class="grp pg2"><div class="rb"><svg width="46" height="40"><use href="#copilot" /></svg><span v-fit="58">Copilot</span></div><small v-fit="48">Copilot</small></div>
              <svg class="fold" width="13" height="10"><use href="#caret" /></svg>
            </div>
            <div class="pmain">
              <div class="pl">
                <svg class="dd2" width="18" height="19"><use href="#dbl-r" /></svg>
                <i></i>
                <svg class="a" width="26" height="25" viewBox="0 0 25 25"><path d="M1 0v24h24" fill="none" stroke="#333" stroke-width="1.600" /><rect x="3" y="2" width="7" height="14" fill="#7ab8ea" stroke="#1f77c9" /><rect x="10" y="12" width="3.500" height="12" fill="#fff" stroke="#333" /><rect x="17" y="1" width="5" height="10" fill="#c8c6c4" stroke="#666" /><rect x="17" y="11" width="5" height="13" fill="#fff" stroke="#333" /></svg>
                <svg class="a" width="26" height="25" viewBox="0 0 25 25"><path d="M1 0v24h24" fill="none" stroke="#333" stroke-width="1.500" /><rect x="4" y="12" width="7" height="12" fill="#7ab8ea" stroke="#1f77c9" /><rect x="17" y="8" width="5" height="16" fill="#c8c6c4" stroke="#777" /><rect x="11" y="1" width="5" height="23" fill="#fff" stroke="#333" stroke-width="1.400" /><path d="M3 12l7 6 7-5 7-6" fill="none" stroke="#333" stroke-width="1.500" /></svg>
                <svg class="a" width="26" height="27" viewBox="0 0 26 27"><circle cx="13" cy="13.500" r="9" fill="none" stroke="#1f77c9" stroke-width="8" /><circle cx="13" cy="13.500" r="9" fill="none" stroke="#7ab8ea" stroke-width="5.500" /></svg>
                <svg class="a" width="26" height="23" viewBox="0 0 26 23"><rect x="1" y="1" width="24" height="20" fill="#fff" stroke="#333" stroke-width="1.600" /><text x="3" y="15" font-family="Noto Sans, sans-serif" font-size="12" textLength="20" fill="#1f8ad0">123</text><path d="M4 18h18" stroke="#777" /></svg>
              </div>
              <div class="pr">
                <div class="phead"><b v-fit="70">データ</b><svg width="19" height="19"><use href="#dbl-r" /></svg></div>
                <div class="find"><svg width="21" height="21"><use href="#search" /></svg><span v-fit="40">検索</span></div>
                <div class="trow root"><svg class="open" width="18" height="11" viewBox="0 0 18 11"><path d="M1 1l8 9 8-9" fill="none" stroke="#666" stroke-width="1.400" /></svg><svg width="19" height="19"><use href="#grid" /></svg><span v-fit="88">売上データ</span></div>
                <div v-for="f in p.fields" :key="f.name" class="trow">
                  <span class="exp"><svg v-if="f.expand" width="10" height="17" viewBox="0 0 10 17"><path d="M1 1l8 7.500-8 7.500" fill="none" stroke="#555" stroke-width="1.400" /></svg></span>
                  <i class="cb"></i>
                  <span class="fi"><svg v-if="f.icon" width="18" height="18"><use :href="'#' + f.icon" /></svg></span>
                  <span v-fit="f.w">{{ f.name }}</span>
                </div>
              </div>
            </div>
          </div>
          <i class="box"></i>
        </div>
        <svg v-if="p.id === 'old'" class="next" width="37" height="100" viewBox="0 0 37 100"><path d="M1 2l35 48L1 98z" fill="#7f7f7f" stroke="#555" stroke-width="2" /></svg>
      </template>
      <p class="note n5">項目名が変更された！</p>
    </section>
  </main>
</template>

<style>
html, body { background: #fff; }
</style>

<style scoped>
* { box-sizing: border-box; }
.page { width: 1608px; height: 2560px; overflow: hidden; background: #fff; color: #333; font: 16px/1 "Noto Sans", "Noto Sans CJK JP", sans-serif; font-feature-settings: "palt"; }
svg { display: block; flex: none; }
.defs { position: absolute; }
.symbols { display: none; }
span, b, small { white-space: nowrap; }
i { font-style: normal; }
p { margin: 0; }
.shot { position: relative; }

/* annotations */
.note { position: absolute; display: flex; flex-direction: column; background: #bf9000; color: #fff; border-radius: 12px; font: 350 41.500px/50px "Noto Sans CJK JP", sans-serif; font-feature-settings: normal; white-space: pre; }
.num { font-weight: 900; }
.hint { position: absolute; left: 474px; top: 373px; color: #bf9000; font: 350 41.500px/50px "Noto Sans CJK JP", sans-serif; font-feature-settings: normal; }
.n1 { left: 357px; top: 512px; width: 292px; height: 75px; padding: 5px 0 0 20px; }
.sq { width: 82px; height: 75px; font-size: 44px; line-height: 68px; align-items: center; }
.n2 { left: 40px; top: 186px; }
.n4 { left: 1407px; top: 26px; font-size: 41px; line-height: 63px; }
.n3 { left: 198px; top: 321px; width: 654px; height: 123px; padding: 4px 0 0 23px; border-radius: 18px; }
.n3 .in { padding-left: 42px; word-spacing: 5.500px; }
.n5 { left: 140px; top: 426px; width: 493px; height: 91px; border-radius: 14px; padding: 13px 0 0 36px; letter-spacing: .3px; }
.rule { position: absolute; background: #bf9000; height: 6px; }
.r1 { left: 425px; top: 356px; width: 117px; }
.r2 { left: 236px; top: 549px; width: 117px; }
.tabrule { left: 156px; top: 68px; width: 70px; height: 11px; }
.box { position: absolute; border: 5px solid #bf9000; }
.bx-head { left: 69px; top: 79px; width: 107px; height: 110px; }
.bx-close { left: 1487px; top: -3px; width: 74px; height: 50px; }
.bx-cols { left: 282px; top: 260px; width: 684px; height: 50px; }
.down { margin: 22px 0 0 211px; }
.down.before { margin-top: 39px; }
.down.after { margin-top: 34px; }

/* report window */
.report { width: 633px; height: 727px; background: #fff; }
.titlebar { display: flex; align-items: center; height: 46px; background: #3b3a39; border-top: 1px solid #666; color: #fff; padding-left: 310px; }
.user { width: 28px; height: 28px; margin-left: 13px; }
.win { width: 14px; height: 14px; margin-left: 46px; }
.win.min { margin-left: 43px; }
.ribbon1 { height: 172px; background: #fafafa; border-bottom: 1px solid #ddd; box-shadow: 0 2px 4px #0002; position: relative; padding-top: 6px; }
.share { display: flex; align-items: center; margin: 0 0 0 518px; width: 107px; height: 32px; border: 0; border-radius: 4px; background: #117865; color: #fff; font: inherit; font-feature-settings: inherit; padding: 0 0 0 10px; }
.share b { margin-left: 12px; }
.share svg:last-child { margin-left: 6px; }
.groups { display: flex; height: 120px; margin-top: 11px; align-items: stretch; }
.grp { display: flex; flex-direction: column; align-items: center; border-right: 1.500px solid #d2d0ce; position: relative; }
.rb { display: grid; grid-template-rows: 49px 23px 23px; justify-items: center; align-items: start; height: 107px; padding-top: 8px; }
.rb span { line-height: 23px; margin-top: -2px; }
.rb.off { color: #b8b6b4; }
.pub { margin-left: 3px; }
.dn { margin-top: 9px; }
.grp small { font-size: 13.500px; line-height: 14px; color: #444; }
.g-calc { width: 297px; align-items: flex-start; }
.g-calc small { margin-left: 93px; }
.btns { display: flex; }
.b1 { width: 112px; margin-left: -20px; justify-items: end; }
.b1 > svg:first-child { margin-right: 61px; }
.b1 .dn { margin-right: 76px; }
.b2 { margin-left: 6px; width: 113px; }
.b2 > svg { margin-left: -1px; margin-top: 1px; }
.b3 { margin-left: 7px; width: 64px; }
.b3 > svg { margin-left: -12px; margin-top: -1px; }
.g77 { width: 77.500px; }
.g82 { width: 82px; }
.fold { margin: auto 0 5px 81px; }
.workspace { display: flex; height: 509px; overflow: hidden; }
.canvas { width: 96px; border-right: 1.500px solid #999; }
.filters { width: 45px; border-right: 1.500px solid #e1dfdd; padding: 17px 0 0 13px; display: flex; flex-direction: column; align-items: flex-start; }
.fun { margin: 21px 0 0 4px; }
.filters b { writing-mode: vertical-rl; text-orientation: sideways; font-size: 20.500px; margin: 12px 0 0 0; font-feature-settings: normal; color: #252423; }
.build { width: 246px; background: #f3f2f1; border-right: 1.500px solid #e1dfdd; overflow: hidden; }
.phead { display: flex; align-items: center; justify-content: space-between; height: 30px; margin: 13px 11px 0 11px; font-size: 21.500px; color: #252423; }
.data .phead { margin-left: 12px; }
.sub { display: flex; align-items: center; height: 30px; margin: 9px 0 0 11px; color: #252423; }
.modes { display: flex; margin: 1px 0 0 11px; height: 43px; align-items: center; }
.mode { width: 44px; height: 43px; background: #d0cecc; padding: 5px; }
.paint { margin-left: 51px; }
.notch { margin-top: 5px; }
.vis { display: grid; grid-template-columns: 25px 25px; column-gap: 13px; row-gap: 12px; margin: 14px 0 0 15px; }
.more { margin: 10px 0 0 16px; font-size: 22px; line-height: 24px; letter-spacing: 1.500px; }
.well { margin-top: 15px; border-top: 1.500px solid #d8d6d4; padding: 17px 0 0 17px; height: 60px; font-size: 16px; background: linear-gradient(90deg, #bbb 50%, transparent 50%) 9px 42px / 5px 1.500px repeat-x; }
.data { width: 246px; background: #f3f2f1; }
.find { display: flex; align-items: center; margin: 24px 0 0 7px; width: 233px; height: 31px; background: #fff; border: 1.500px solid #d1d1d1; border-bottom: 2px solid #666; border-radius: 5px; padding-left: 16px; color: #666; font-size: 18.500px; }
.find span { margin-left: 9px; }
.tree { display: flex; align-items: center; height: 30px; margin-top: 14px; padding-left: 21px; }
.tree .tw { margin-right: 9px; }
.tree span { margin-left: 8px; }
.menu { position: absolute; left: 229px; top: 348px; width: 247px; height: 379px; padding-top: 2px; background: #fff; border-radius: 5px 5px 0 0; box-shadow: 0 0 4px #0004; overflow: hidden; clip-path: inset(-6px -6px 0 -6px); }
.mgroup + .mgroup { border-top: 1.500px solid #e6e6e6; }
.mitem { height: 34.100px; display: flex; align-items: center; padding-left: 12px; font-size: 16px; color: #333; }

/* query editor */
.editor { width: 966px; height: 435px; margin-top: 14px; }
.editor.after { width: 1559px; height: 550px; margin-top: 31px; }
.frame { height: 100%; margin-left: 2px; border-top: 1.500px solid #555; border-left: 1.500px solid #b9c0bd; overflow: hidden; font-size: 15.700px; background: #fff; }
.after .frame { border-right: 1.500px solid #aaa; }
.before .frame { border-radius: 10px 0 0 0; }
.after .frame { border-radius: 10px 10px 0 0; }
.qtitle { display: flex; align-items: center; height: 41px; padding-left: 12px; color: #222; }
.bar { width: 1.500px; height: 17px; background: #aaa; margin: 0 12px; }
.qat { margin-left: 10px; }
.bar.b { margin: 0 10px; }
.controls { display: flex; margin: 0 24px 0 auto; align-items: center; gap: 47.500px; color: #222; }
.qtabs { display: flex; height: 33px; border-bottom: 1.500px solid #e1e1e1; position: relative; }
.file { width: 76px; height: 31px; background: #1979ca; color: #fff; padding-left: 15px; display: flex; align-items: center; }
.tab { height: 31px; display: flex; align-items: center; color: #444; }
.tab.on { height: 33px; width: 70px; border: 1.500px solid #e1e1e1; border-bottom: 0; background: #f4f6f8; justify-content: center; padding-bottom: 2px; }
.helps { display: flex; margin: -1px 5px 0 auto; align-items: center; gap: 13px; }
.helps b { width: 22px; height: 22px; border-radius: 11px; background: #0a63c0; color: #fff; text-align: center; line-height: 22px; }
.qribbon { display: flex; height: 133px; background: #f4f6f8; border-bottom: 1.500px solid #dcdcdc; color: #404040; }
.qg { position: relative; display: flex; flex-direction: column; align-items: center; margin: 4px 0 5px; border-right: 1.500px solid #dfe1e3; flex: none; }
.qb { display: flex; align-self: stretch; height: 93px; padding-top: 2px; flex: none; }
.ql { margin-top: 13px; color: #555; }
.t1 { width: 313px; }
.t2 { width: 422px; }
.t3 { width: 231px; }
.t3 .ql { margin-left: -3px; }
.before .t3 { border: 0; }
.t4 { width: 198px; }
.big { display: grid; grid-template-rows: 51px 21px 21px; justify-items: center; align-items: center; flex: none; line-height: 21px; }
.w66 { width: 68px; } .w107 { width: 102px; }
.t4 .w66 { width: 66px; } .w52 { width: 52px; }
.w58 { width: 67px; } .w56 { width: 48px; }
.py { width: 76px; justify-items: end; margin-left: -3px; }
.py em { font: 500 39px/48px "Noto Sans", sans-serif; color: #1b93dc; margin-right: 31px; }
.py span { justify-self: end; margin-right: 8px; }
.col { display: flex; flex-direction: column; }
.cmd { display: flex; align-items: center; height: 30px; gap: 5px; flex: none; }
.c0 { margin-left: 7px; }
.c0 .cmd { gap: 6px; }
.c1 { margin-left: 9px; width: 133px; }
.c1 .cmd { gap: 4px; }
.c2 { width: 113px; }
.c2 .cmd, .c3 .cmd { gap: 6px; }
.c4 { margin-left: 7px; }
.ar::after { content: ""; display: inline-block; margin: 0 0 3px 5px; border: 4px solid transparent; border-top: 4.500px solid #222; border-bottom: 0; }
.dim { color: #999; }
.dim .ar::after { border-top-color: #aaa; }
.qmain { display: flex; background: #f3f2f1; }
.editor .qmain { height: 540px; }
.queries { width: 244px; border-right: 1.500px solid #d6d6d6; flex: none; }
.qhead { display: flex; align-items: center; height: 48px; padding: 0 11px 0 20px; font-size: 19px; color: #444; }
.qhead small { font-size: 16px; margin-left: 8px; }
.qhead svg { margin-left: auto; }
.query { display: flex; align-items: center; gap: 14px; margin: 7px 4px 0 5px; height: 33px; border-left: 3px solid #117865; background: #d1cfcd; padding-left: 8px; font-size: 16.500px; }
.sheet { flex: none; width: 948px; padding: 14px 0 0 7px; overflow: hidden; }
.fbar { display: flex; gap: 6px; height: 38px; }
.fx { width: 149px; display: flex; align-items: center; background: #fff; border: 1.500px solid #d2d2d2; padding: 0 14px 0 17px; justify-content: space-between; }
.fx em { font: italic 25px/1 "Liberation Serif", serif; color: #777; margin-top: -4px; }
.formula { flex: 1; display: flex; align-items: center; justify-content: space-between; background: #fff; border: 1.500px solid #d2d2d2; padding: 0 9px 0 11px; margin-right: 6px; color: #444; }
.before .sheet { width: 716px; }
.before .formula { margin-right: -4px; padding-right: 0; overflow: hidden; }
code { font: 15px/1 "DejaVu Sans Mono", "Noto Sans CJK JP", monospace; letter-spacing: -.03px; color: #111; white-space: pre; font-feature-settings: normal; }
.src { font-size: 16px; }
.str { color: #a31515; } .kw { color: #1a1aff; } .ty { color: #198b8b; }
.table { margin-top: 5px; width: 696px; border: 1px solid #cfcfcf; border-bottom: 0; background: #fff; font-size: 14.500px; }
.tr { display: flex; height: 28.670px; }
.tr > div { border-right: 1.500px solid #d0d0d0; border-bottom: 1.500px solid #d8d8d8; display: flex; align-items: center; }
.no { width: 40px; background: #f3f2f1; justify-content: center; color: #777; font-size: 15px; flex: none; }
.td { width: 218px; padding: 0 4px; flex: none; }
.td.sel { background: #e5e5e5; }
.th { height: 29px; background: #f3f2f1; color: #555; }
.th .td.sel { background: #117865; color: #fff; }
.th .td { padding: 0 3px; }
.th b { margin-left: 7px; font-size: 15.500px; font-weight: 600; }
.th .no i { border: 4px solid transparent; border-top-color: #555; border-bottom: 0; margin-left: 1px; }
.dd { margin-left: auto; width: 22px; height: 22px; background: #fff; border: 1.500px solid #aaa; display: flex; align-items: center; justify-content: center; }
.dd::after { content: ""; border: 4.500px solid transparent; border-top: 5px solid #666; border-bottom: 0; }
.tr.q { height: 5.500px; }
.q .td { background: #01b8aa; }
.tr.q > .td { border-bottom: 0; }
.q .td, .q .no { padding: 0; }
.after .tr:not(.th) .td { justify-content: flex-end; font-style: italic; padding-right: 4px; }
.settings { flex: none; width: 362px; border-left: 1.500px solid #d6d6d6; padding-left: 14px; font-size: 16.300px; }
.sh { display: flex; align-items: center; justify-content: space-between; height: 48px; padding: 0 36px 0 1px; font-size: 19.500px; color: #444; }
.sh svg { color: #777; }
.st { display: flex; align-items: center; height: 28px; margin-top: 6px; color: #222; }
.st i { border: 4.500px solid transparent; border-right-color: #444; border-bottom-color: #444; margin-right: 8px; }
.settings label { display: flex; align-items: center; height: 27px; margin-left: 17px; }
.inp { margin: 1px 0 0 17px; width: 297px; height: 31px; background: #fff; border: 1.500px solid #c8c8c8; display: flex; align-items: center; padding-left: 7px; }
.settings a { display: flex; align-items: center; margin: 5px 0 0 17px; height: 28px; color: #117865; }
.s2 { margin-top: 17px; }
.steps { margin: 6px 0 0 17px; width: 297px; height: 130px; border: 1.500px solid #c8c8c8; }
.step { display: flex; align-items: center; height: 27.200px; padding-left: 31px; position: relative; }
.step .gear { margin: 0 10px 0 auto; }
.step.on { background: #d1cfcd; border-left: 3px solid #117865; padding-left: 8px; }
.step .x { margin-right: 6px; color: #777; }
.tear { position: absolute; left: 1054px; top: -10px; }

/* result */
.result { position: relative; display: flex; margin-top: 21px; height: 452px; }
.pane { position: relative; margin-left: 1.500px; width: 305.500px; }
.pane.new { margin-left: 46.500px; width: 290px; }
.inner { height: 452px; overflow: hidden; background: #f3f2f1; }
.new .prib, .new .pmain { margin-left: -15.500px; }
.prib { display: flex; height: 126px; width: 306px; background: #fafafa; border-bottom: 1px solid #ddd; box-shadow: 0 2px 4px #0002; }
.prib .rb { grid-template-rows: 51px 23px 23px; height: 108px; padding-top: 3px; font-size: 17px; }
.prib .grp { height: 123px; }
.prib .grp small { font-size: 14.500px; }
.prib .pub { margin-left: 4px; }
.grp.pg0 { width: 23.500px; align-items: flex-start; }
.pg0 .rb { margin-left: -43px; width: 52px; }
.pg0 small { margin-left: -40px; }
.pg1 { width: 84.500px; }
.pg2 { width: 89px; }
.prib .fold { margin: auto 0 8px 88px; }
.pmain { display: flex; width: 306px; }
.pl { width: 38px; border-right: 1.500px solid #e1dfdd; height: 326px; flex: none; }
.pl .dd2 { margin: 22px 0 0 7px; }
.pl i { display: block; margin-top: 114px; border-top: 1.500px solid #999; }
.pl .a { margin: 20px 0 0 -5px; }
.pl .a + .a { margin-top: 16px; }
.pl .a:last-child { margin-top: 15px; }
.pr { flex: 1; }
.pr .phead { margin: 16px 12px 0 13px; font-size: 23.500px; }
.pr .find { margin: 26px 0 0 7px; width: 254px; height: 34px; padding-left: 17px; font-size: 19.500px; }
.pr .find span { margin-left: 12px; }
.trow { display: flex; align-items: center; height: 35.600px; font-size: 17.300px; }
.trow.root { margin-top: 15px; padding-left: 19px; }
.root .open { margin-right: 6px; }
.root span { margin-left: 8px; }
.exp { width: 65.500px; padding-left: 45px; }
.cb { width: 18px; height: 18px; border: 1.500px solid #777; border-radius: 3px; }
.fi { width: 39px; padding-left: 12px; }
.pane.old .box { left: 40px; top: 232px; width: 217px; height: 165px; }
.pane.new .box { left: 48px; top: 232px; width: 245px; height: 165px; }
.next { margin: 263px 0 0 30.500px; }
</style>
